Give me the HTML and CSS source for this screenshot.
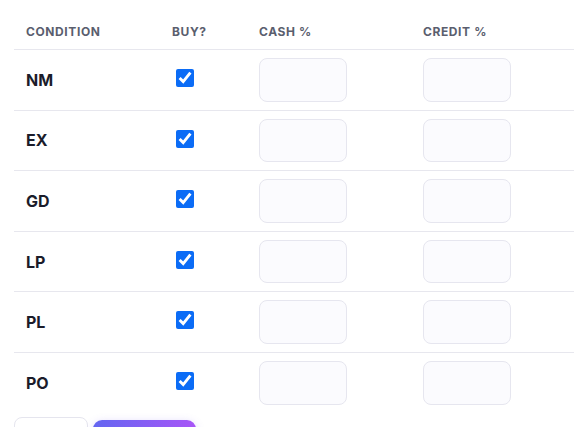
FILE: index.html
```html
<!DOCTYPE html>
<html lang="en">
<head>
    <meta charset="UTF-8">
    <meta name="viewport" content="width=device-width, initial-scale=1.0">
    <title>Buylist Conditions</title>
    <link rel="stylesheet" href="styles.css">
</head>
<body>
    <div class="panel">
        <table class="cond-table">
            <thead>
                <tr>
                    <th class="col-cond">Condition</th>
                    <th class="col-buy">Buy?</th>
                    <th class="col-cash">Cash %</th>
                    <th class="col-credit">Credit %</th>
                </tr>
            </thead>
            <tbody>
                <tr>
                    <td class="cond-name">NM</td>
                    <td><input type="checkbox" checked></td>
                    <td><input type="text" class="pct-input"></td>
                    <td><input type="text" class="pct-input"></td>
                </tr>
                <tr>
                    <td class="cond-name">EX</td>
                    <td><input type="checkbox" checked></td>
                    <td><input type="text" class="pct-input"></td>
                    <td><input type="text" class="pct-input"></td>
                </tr>
                <tr>
                    <td class="cond-name">GD</td>
                    <td><input type="checkbox" checked></td>
                    <td><input type="text" class="pct-input"></td>
                    <td><input type="text" class="pct-input"></td>
                </tr>
                <tr>
                    <td class="cond-name">LP</td>
                    <td><input type="checkbox" checked></td>
                    <td><input type="text" class="pct-input"></td>
                    <td><input type="text" class="pct-input"></td>
                </tr>
                <tr>
                    <td class="cond-name">PL</td>
                    <td><input type="checkbox" checked></td>
                    <td><input type="text" class="pct-input"></td>
                    <td><input type="text" class="pct-input"></td>
                </tr>
                <tr>
                    <td class="cond-name">PO</td>
                    <td><input type="checkbox" checked></td>
                    <td><input type="text" class="pct-input"></td>
                    <td><input type="text" class="pct-input"></td>
                </tr>
            </tbody>
        </table>

        <div class="actions">
            <button class="btn-cancel">Cancel</button>
            <button class="btn-save">Save</button>
        </div>
    </div>
</body>
</html>
```

FILE: styles.css
```css
body {
    font-family: Inter, 'Noto Sans', sans-serif;
    background-color: #ffffff;
    margin: 0;
    padding: 10px 14px;
    color: #1b1c2a;
}
.panel {
    width: 560px;
}
.cond-table {
    width: 100%;
    border-collapse: collapse;
    table-layout: fixed;
}
.cond-table th {
    text-align: left;
    font-size: 12px;
    font-weight: 700;
    text-transform: uppercase;
    letter-spacing: 0.05em;
    color: #5a5e6e;
    padding: 14px 12px 10px;
    line-height: 15px;
    border-bottom: 1px solid #e7e7ee;
}
.col-cond { width: 122px; }
.col-buy { width: 63px; }
.col-cash { width: 140px; }
.cond-table td {
    padding: 8px 12px;
    border-bottom: 1px solid #e7e7ee;
    vertical-align: middle;
}
.cond-table tbody tr:last-child td {
    border-bottom: none;
}
.cond-name {
    font-size: 16px;
    font-weight: 700;
    color: #1b1c2a;
}
.cond-table input[type="checkbox"] {
    width: 18px;
    height: 18px;
    margin: 0 0 4px 4px;
    accent-color: #0b6cf6;
    vertical-align: middle;
}
.pct-input {
    box-sizing: border-box;
    width: 88px;
    height: 43.6px;
    border: 1px solid #e6e6ef;
    border-radius: 8px;
    background-color: #fbfbfe;
    padding: 0 10px;
    font-size: 14px;
    display: block;
}
.actions {
    display: flex;
    gap: 5px;
    margin-top: 4px;
    align-items: flex-start;
}
.btn-cancel {
    width: 74px;
    height: 48px;
    background-color: #ffffff;
    border: 1px solid #e5e5ee;
    border-radius: 8px;
    font-size: 14px;
    color: #1b1c2a;
}
.btn-save {
    width: 103px;
    height: 46px;
    margin-top: 3px;
    border: none;
    border-radius: 9px;
    background: linear-gradient(90deg, #6366f1, #a855f7);
    color: #ffffff;
    font-size: 14px;
    font-weight: 600;
    box-shadow: 0 2px 8px rgba(124, 92, 246, 0.25);
}
```
